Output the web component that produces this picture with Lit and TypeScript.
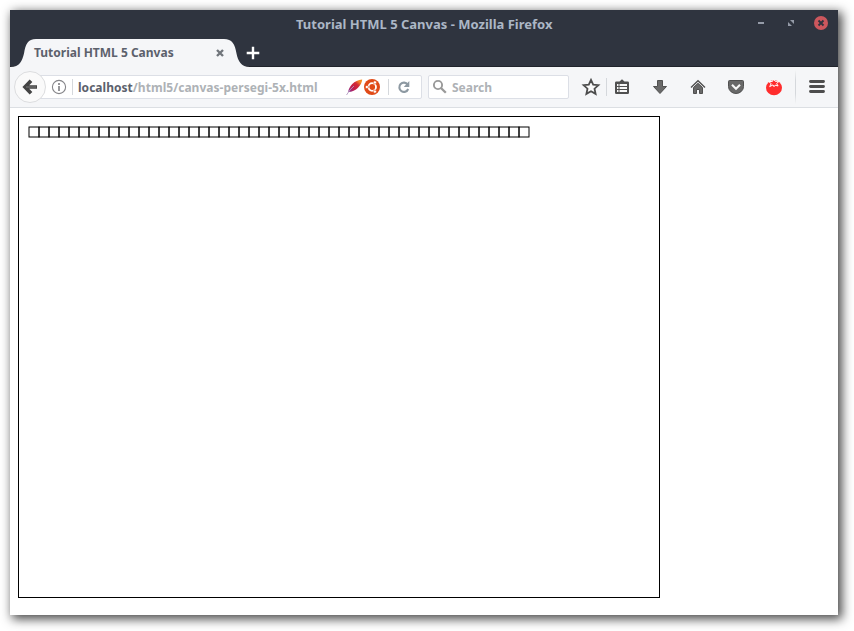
import { LitElement, html, css, svg } from "lit";
import { customElement } from "lit/decorators.js";

const SQUARES = Array.from({ length: 50 }, (_, i) => 10 + i * 10);

@customElement("canvas-page")
class CanvasPage extends LitElement {
  static styles = css`
    :host { display: block; padding: 8px; }
    svg { display: block; border: 1px solid #000; }
    rect { fill: none; stroke: #000; stroke-width: 1; }
  `;
  render() {
    return html`<svg width="640" height="480" viewBox="0 0 640 480">
      ${SQUARES.map((x) => svg`<rect x=${x} y="10" width="10" height="10"></rect>`)}
    </svg>`;
  }
}

@customElement("title-bar")
class TitleBar extends LitElement {
  static styles = css`
    :host { display: block; position: relative; height: 57px; box-sizing: border-box; background: #2f343f; border-bottom: 1px solid #20232b; }
    .caption { display: grid; grid-template-columns: 1fr auto; height: 29px; }
    .title { padding-left: 286px; font-size: 13px; line-height: 28px; color: #acb7c6; white-space: nowrap; }
    .controls { display: flex; align-items: center; gap: 16px; height: 26px; padding-right: 10px; }
    .controls svg { display: block; }
    .tabs { display: flex; height: 28px; align-items: flex-start; }
    .tab { position: relative; width: 236px; height: 28px; flex: none; display: flex; }
    .shape { position: absolute; left: 0; top: 0; }
    .label { position: relative; width: 182px; padding-left: 24px; box-sizing: border-box; font-size: 12px; line-height: 28px; color: #5c616c; white-space: nowrap; }
    .close { position: relative; margin: 10px 0 0 24px; }
    .plus { margin: 7px 0 0 0; }
  `;
  render() {
    return html`
      <div class="caption">
        <div class="title">Tutorial HTML 5 Canvas - Mozilla Firefox</div>
        <div class="controls">
          <svg width="14" height="14"><path d="M4 7h6" stroke="#959ba8" stroke-width="2"/></svg>
          <svg width="14" height="14"><path d="M6 4h4v4zM4 6v4h4z" fill="#959ba8"/></svg>
          <svg width="14" height="14" overflow="visible"><circle cx="7" cy="7" r="7" fill="#cc575d"/><path d="M4.5 4.5l5 5m0-5l-5 5" stroke="#2f343f" stroke-width="1.9"/></svg>
        </div>
      </div>
      <div class="tabs">
        <div class="tab">
          <svg class="shape" width="242" height="28"><path d="M0 28C10 28 12 22 14 14.5C15.5 5 18 0 26 0H214C222 0 225 5 226.5 14.5C228 22 231 28 240 28Z" fill="#f5f6f8"/></svg>
          <span class="label">Tutorial HTML 5 Canvas</span>
          <svg class="close" width="8" height="8"><path d="M1 1l6 6m0-6l-6 6" stroke="#70757b" stroke-width="2.4"/></svg>
        </div>
        <svg class="plus" width="14" height="14"><path d="M7 .7v12.6M.7 7h12.6" stroke="#fff" stroke-width="2.4"/></svg>
      </div>`;
  }
}

@customElement("nav-bar")
class NavBar extends LitElement {
  static styles = css`
    :host { display: flex; align-items: center; height: 41px; box-sizing: border-box; padding: 0 0 0 4px; background: #f5f6f8; border-bottom: 1px solid #dcdfe3; }
    svg { display: block; flex: none; overflow: visible; }
    .back { position: relative; width: 32px; height: 32px; margin-right: -12px; }
    .field { box-sizing: border-box; height: 24px; background: #fff; border: 1px solid #dcdfe6; border-radius: 2px; display: flex; align-items: center; flex: none; font-size: 12px; line-height: 22px; color: #aeb2b6; white-space: nowrap; }
    .url { width: 388px; padding-left: 16px; }
    .line { width: 1px; height: 16px; background: #d5d8dc; flex: none; }
    .address { width: 273px; flex: none; padding: 2px 0 0 5px; box-sizing: border-box; letter-spacing: 0.03px; }
    .host { color: #5c616c; }
    .info { margin-right: 5px; }
    .ubuntu { margin: 0 8px 0 1px; }
    .reload { margin-left: 7px; }
    .search { width: 141px; margin-left: 6px; padding-left: 3px; gap: 4px; }
    .hint { padding-top: 2px; }
    .star { margin-left: 13px; }
    .buttons { display: flex; align-items: center; gap: 20px; margin-left: 6px; }
    .split { margin-left: 6px; height: 18px; }
    .tall { margin: 0 12px; height: 34px; background: linear-gradient(#f5f6f7, #d5d8dc 30%, #d5d8dc 70%, #f5f6f7); }
  `;
  render() {
    return html`
      <svg class="back" viewBox="0 0 32 32"><circle cx="16" cy="16" r="15.5" fill="#fafafa" stroke="#dcdddf"/><path d="M17 9.8L11 16l6 6.2M11.5 16H23" fill="none" stroke="#444" stroke-width="3.7"/><path d="M12 16H22" stroke="#686868" stroke-width="1.5"/></svg>
      <div class="field url">
        <svg class="info" width="16" height="16"><circle cx="8" cy="8" r="6.6" fill="none" stroke="#858589" stroke-width="1.1"/><path d="M8 7v5M8 4v2" stroke="#858589" stroke-width="1.7"/></svg>
        <span class="line"></span>
        <span class="address"><span class="host">localhost</span>/html5/canvas-persegi-5x.html</span>
        <svg width="17" height="17" viewBox="0 0 17 17">
          <defs><linearGradient id="feather" x1="0" y1="1" x2="1" y2="0"><stop offset="0" stop-color="#87339a"/><stop offset=".35" stop-color="#c51d44"/><stop offset=".62" stop-color="#d12b36"/><stop offset=".82" stop-color="#f58a22"/></linearGradient></defs>
          <path d="M2.2 13C2.6 8 8 1 16.2.5C15.9 6 10 12.8 2.2 13Z" fill="url(#feather)"/><path d="M.5 16Q4 10 8 7" fill="none" stroke="#b29bc0" stroke-width=".9"/>
        </svg>
        <svg class="ubuntu" width="16" height="16"><circle cx="8" cy="8" r="8" fill="#e04a17"/><circle cx="8.2" cy="8" r="3.8" fill="none" stroke="#fff" stroke-width="1.8"/><g fill="#fff" stroke="#e04a17" stroke-width=".6"><circle cx="2.9" cy="8" r="1.6"/><circle cx="10.9" cy="3.4" r="1.6"/><circle cx="10.9" cy="12.6" r="1.6"/></g></svg>
        <span class="line"></span>
        <svg class="reload" width="16" height="16"><path d="M11.7 5.6A4.6 4.6 0 1 0 12.2 10" fill="none" stroke="#8d99a2" stroke-width="2.1"/><path d="M13.3 2v6H7.8z" fill="#8d99a2"/></svg>
      </div>
      <div class="field search">
        <svg width="16" height="16"><circle cx="6" cy="6" r="4.1" fill="none" stroke="#999" stroke-width="1.9"/><path d="M9 9l4.8 4.8" stroke="#999" stroke-width="2.3"/></svg>
        <span class="hint">Search</span>
      </div>
      <svg class="star" width="18" height="18"><path d="M9 1.8l2.2 4.8 5.2.6-3.9 3.5 1.1 5.2L9 13.2l-4.6 2.7 1.1-5.2-3.9-3.5 5.2-.6z" fill="#f9f9f9" stroke="#4d4d4d" stroke-width="1.8"/></svg>
      <span class="line split"></span>
      <div class="buttons">
        <svg width="18" height="18"><path d="M3.3 3.5h3.2L9 1.2l2.5 2.3h3.2q1.3 0 1.3 1.3v9.9q0 1.3-1.3 1.3H3.3Q2 16 2 14.7V4.8q0-1.3 1.3-1.3z" fill="#505050"/><path d="M4 7h1.500M6.500 7H14M4 10h1.500M6.500 10H14M4 13h1.500M6.500 13H14" stroke="#f8f8f8" stroke-width="1.8"/></svg>
        <svg width="18" height="18"><path d="M6.5 2.5h5v6h4L9 15.5 2.5 8.5h4z" fill="#696969" stroke="#505050"/></svg>
        <svg width="18" height="18"><path d="M2 9.5L9 2.700l7 6.800" fill="none" stroke="#505050" stroke-width="1.400"/><path d="M4.500 9.500L9 5.300l4.500 4.200v6h-3v-4h-3v4h-3z" fill="#696969" stroke="#505050"/></svg>
        <svg width="18" height="18"><path d="M1.500 3.500q0-1 1-1h13q1 0 1 1v5a7.500 7 0 0 1-15 0z" fill="#696969" stroke="#505050"/><path d="M5 6.800l4 4 4-4" fill="none" stroke="#f8f8f8" stroke-width="2.100"/></svg>
        <svg width="18" height="18"><ellipse cx="9" cy="9.700" rx="8" ry="7.500" fill="#ff2d2d"/><path d="M3.700 3.600l3.800-.2L8.600 1.200l1.700 2.200 4-.2-2.700 2.300 1.500 2.500-3-.8-1.100 1.500L8 6.900 4.700 8.600l1.500-3z" fill="#ff2d2d" stroke="#fff" stroke-width="1"/></svg>
      </div>
      <span class="line tall"></span>
      <svg width="18" height="18"><path d="M2.500 3.500h13M2.500 8.500h13M2.500 13.500h13" stroke="#4d4d4d" stroke-width="2.900" stroke-linecap="round"/></svg>`;
  }
}

@customElement("app-root")
class AppRoot extends LitElement {
  static styles = css`
    :host { display: block; height: 631px; padding: 10px 16px 16px 10px; box-sizing: border-box; overflow: hidden; background: #fff; font-family: "Noto Sans", sans-serif; font-weight: 700; }
    .window { height: 605px; background: #fff; box-shadow: 3px 3px 10px 1px rgba(0, 0, 0, 0.72); }
  `;
  render() {
    return html`<div class="window"><title-bar></title-bar><nav-bar></nav-bar><canvas-page></canvas-page></div>`;
  }
}
